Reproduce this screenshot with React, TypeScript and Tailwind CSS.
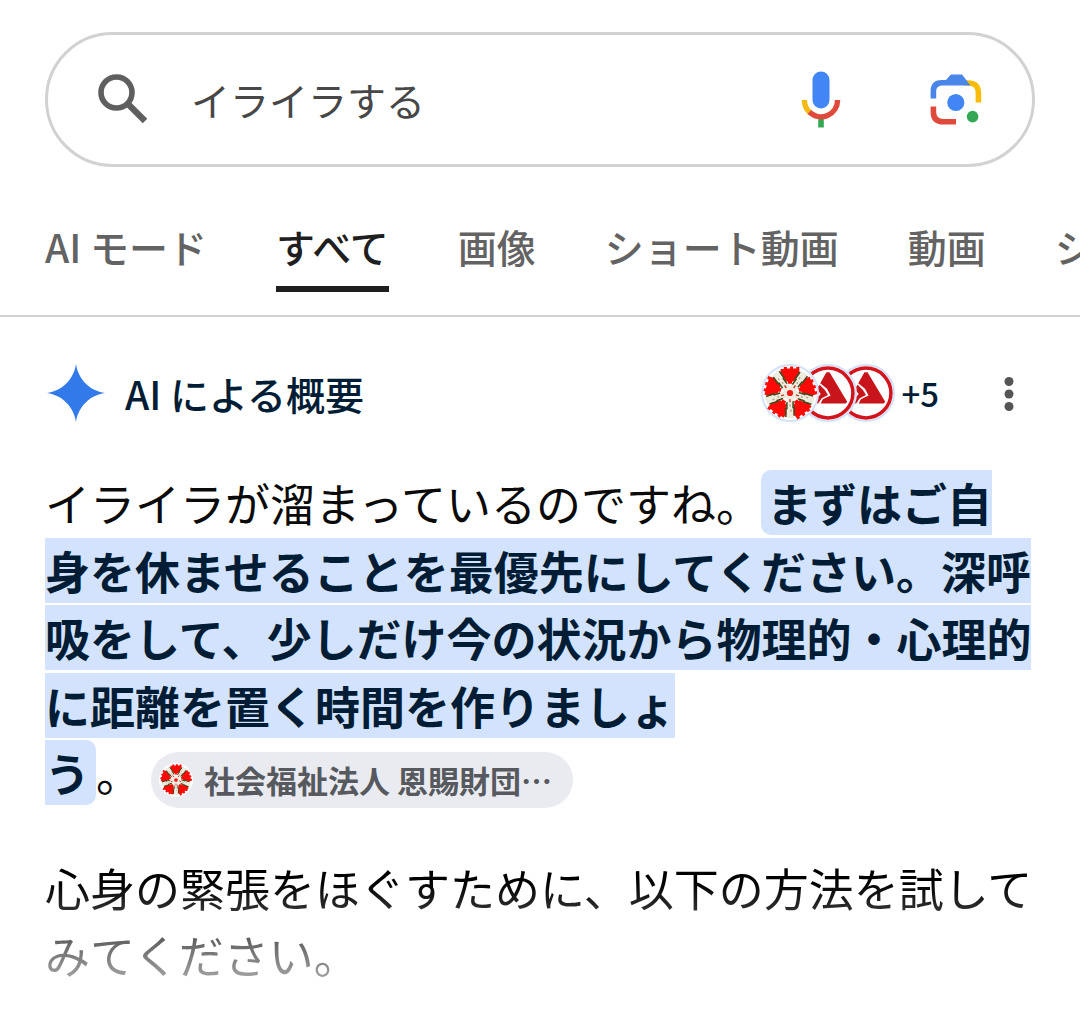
import { useState } from 'react';
import type { ReactNode } from 'react';

const TABS = ['AI モード', 'すべて', '画像', 'ショート動画', '動画', 'ショッピング', 'ニュース'];

const PETAL_ANGLES = [0, 72, 144, 216, 288];

function SearchIcon() {
  return (
    <svg viewBox="0 0 51 51" className="size-[51px] shrink-0" aria-hidden="true">
      <circle cx="18.5" cy="18.5" r="15.5" fill="none" stroke="#5f5f5f" strokeWidth="5.6" />
      <path d="M30 30 L47 47" stroke="#5f5f5f" strokeWidth="6.4" fill="none" />
    </svg>
  );
}

function MicIcon() {
  return (
    <svg viewBox="0 0 40 57" className="h-[57px] w-10" aria-hidden="true">
      <rect x="11.5" y="0.5" width="17" height="37" rx="8.5" fill="#4285f4" />
      <path d="M17.2 46 h5.6 v10.5 h-5.6z" fill="#34a853" />
      <path d="M3.4 29 A16.6 16.6 0 0 0 8.8 41.4" fill="none" stroke="#f4b912" strokeWidth="5.4" />
      <path d="M8.4 41 A16.6 16.6 0 0 0 36.6 29" fill="none" stroke="#e04a3d" strokeWidth="5.4" />
    </svg>
  );
}

function LensIcon() {
  return (
    <svg viewBox="0 0 52 52" className="size-[52px]" aria-hidden="true">
      <path d="M34 8.8 C43.5 8.8 48.4 10.5 48.4 19 V28.5" fill="none" stroke="#f9bc0b" strokeWidth="5.6" />
      <path
        d="M0.6 24.5 V17 C0.6 9 5.5 6 11.5 6 H16 L20.8 0.5 H32 L40.5 11.6 H14 C8.5 11.6 6.2 13.5 6.2 17.5 V24.5z"
        fill="#4a86e8"
      />
      <path d="M3.4 32.5 V38 C3.4 44.5 7 47.8 13.5 47.8 H26" fill="none" stroke="#e04a3d" strokeWidth="5.6" />
      <circle cx="25.8" cy="28.5" r="8.6" fill="#4285f4" />
      <circle cx="42.6" cy="42.6" r="5.8" fill="#34a853" />
    </svg>
  );
}

function SparkIcon() {
  return (
    <svg viewBox="0 0 60 60" className="size-[60px] shrink-0" aria-hidden="true">
      <path d="M31 1 C33 16 45 28 60 30 C45 32 33 44 31 59 C29 44 17 32 2 30 C17 28 29 16 31 1z" fill="#3279ea" />
    </svg>
  );
}

function FoundationLogo() {
  return (
    <svg viewBox="-26 -26 52 52" className="size-full" aria-hidden="true">
      {PETAL_ANGLES.map((angle) => (
        <g key={angle} transform={`rotate(${angle})`}>
          <path
            d="M-9 -23 H-6 V-25 H-3 V-23.5 H0 V-25.5 H3 V-23.5 H6 V-25 H9 V-20 L10 -17 L7 -14 H5 V-11 H2 V-9 H-2 V-11 H-5 V-14 H-7 L-10 -17 L-9 -20z"
            fill="#fb0a07"
          />
        </g>
      ))}
      {PETAL_ANGLES.map((angle) => (
        <g key={angle} transform={`rotate(${angle + 36})`}>
          <path d="M0 -3 V-24" stroke="#efebdf" strokeWidth="7" />
          <path d="M-3 -8 V-14 H-4 V-22 M3 -9 V-15 H4 V-23" stroke="#3f4a1c" strokeWidth="1.5" fill="none" />
          <path d="M0 -11 V-13 M-1 -16 V-18" stroke="#b9a98c" strokeWidth="1.4" />
          <path d="M0 -6 V-9" stroke="#c2402f" strokeWidth="1.4" />
        </g>
      ))}
      <circle r="5" fill="#efebdf" />
      <circle r="3" fill="#f01b14" />
    </svg>
  );
}

function TriangleLogo() {
  return (
    <svg viewBox="-26 -26 52 52" className="size-full" aria-hidden="true">
      <circle r="24" fill="#fff" stroke="#d3141c" strokeWidth="3.4" />
      <path d="M-1.5 -20 H1.5 L18.5 8.5 L17 10 H-7 L-5 6 L2.5 2.5 L-1 -4 L-7.5 -9.5z" fill="#c8151b" />
      <path d="M-8 -8 L-3 -3 L0 2 L-6 5 L-9.5 10 H-15 L-7 1 L-11 -4z" fill="#c8151b" />
    </svg>
  );
}

function SourceBadge({ children, className }: { children: ReactNode; className: string }) {
  return (
    <span className={`relative block size-[58px] rounded-full border-2 border-[#d3e1f9] bg-white ${className}`}>
      {children}
    </span>
  );
}

function SearchBar() {
  const [query, setQuery] = useState('イライラする');

  return (
    <form
      role="search"
      onSubmit={(e) => e.preventDefault()}
      className="mx-[45px] mt-8 flex h-[135px] items-center rounded-full border-[3px] border-[#d2d2d2] px-[50px]"
    >
      <SearchIcon />
      <input
        type="text"
        aria-label="検索"
        value={query}
        onChange={(e) => setQuery(e.target.value)}
        className="ml-[42px] min-w-0 flex-1 bg-transparent text-[39px] text-[#474747] outline-none"
      />
      <button type="button" aria-label="音声検索" className="mr-[89px]">
        <MicIcon />
      </button>
      <button type="button" aria-label="画像で検索">
        <LensIcon />
      </button>
    </form>
  );
}

function TabBar() {
  return (
    <nav className="mt-[51px] overflow-hidden border-b-2 border-[#d2d2d2]">
      <ul className="flex gap-[69px] pb-[23px] pl-[45px] text-[39px] leading-[56px] font-medium whitespace-nowrap">
        {TABS.map((tab) => {
          const active = tab === 'すべて';
          return (
            <li key={tab} className="shrink-0">
              <a
                href="#"
                aria-current={active ? 'page' : undefined}
                className={`block border-b-[6px] pb-3 ${
                  active ? 'border-[#1f1f1f] text-[#1f1f1f]' : 'border-transparent text-[#636363]'
                }`}
              >
                {tab}
              </a>
            </li>
          );
        })}
      </ul>
    </nav>
  );
}

function Overview() {
  return (
    <main className="px-[45px] pt-[46px]">
      <div className="flex items-center text-[#001d35]">
        <SparkIcon />
        <h1 className="ml-5 text-[39px] leading-[60px] font-medium">AI による概要</h1>
        <div className="ml-auto flex items-center">
          <SourceBadge className="z-20">
            <FoundationLogo />
          </SourceBadge>
          <SourceBadge className="z-10 -ml-5">
            <TriangleLogo />
          </SourceBadge>
          <SourceBadge className="-ml-5">
            <TriangleLogo />
          </SourceBadge>
          <span className="ml-[6px] text-[33px] leading-[60px] font-medium">+5</span>
        </div>
        <button type="button" aria-label="その他" className="ml-11 flex w-[52px] justify-center">
          <svg viewBox="0 0 12 36" className="h-9 w-3" fill="#555" aria-hidden="true">
            <circle cx="6" cy="6.5" r="4.5" />
            <circle cx="6" cy="19" r="4.5" />
            <circle cx="6" cy="31.5" r="4.5" />
          </svg>
        </button>
      </div>

      <p className="mt-[46px] text-[45px] leading-normal text-[#0a0a0a]">
        イライラが溜まっているのですね。
        <mark className="rounded-l-[10px] bg-[#d3e3fd] pl-[6px] font-bold text-[#001d35]">
          まずはご自身を休ませることを最優先にしてください。深呼吸をして、少しだけ今の状況から物理的・心理的に距離を置く時間を作りましょ
        </mark>
        <span className="whitespace-nowrap">
          <mark className="rounded-r-[10px] bg-[#d3e3fd] pr-[6px] font-bold text-[#001d35]">う</mark>。
          <button
            type="button"
            className="ml-[10px] inline-flex h-14 items-center rounded-full bg-[#e9ebf0] pr-[21px] pl-2 align-middle text-[31px] leading-none font-bold text-[#56595e]"
          >
            <span className="mr-[11px] block size-[34px] rounded-full bg-white p-px">
              <FoundationLogo />
            </span>
            社会福祉法人 恩賜財団…
          </button>
        </span>
      </p>

      {/* Text fades out towards the collapsed part of the answer */}
      <p className="mt-[46px] bg-[linear-gradient(#000_28px,#fff_180px)] bg-clip-text text-[45px] leading-normal text-transparent">
        心身の緊張をほぐすために、以下の方法を試してみてください。
      </p>
    </main>
  );
}

export default function App() {
  return (
    <div lang="ja" className="flow-root overflow-x-hidden bg-white pb-5 font-['Noto_Sans_CJK_JP',sans-serif]">
      <SearchBar />
      <TabBar />
      <Overview />
    </div>
  );
}
